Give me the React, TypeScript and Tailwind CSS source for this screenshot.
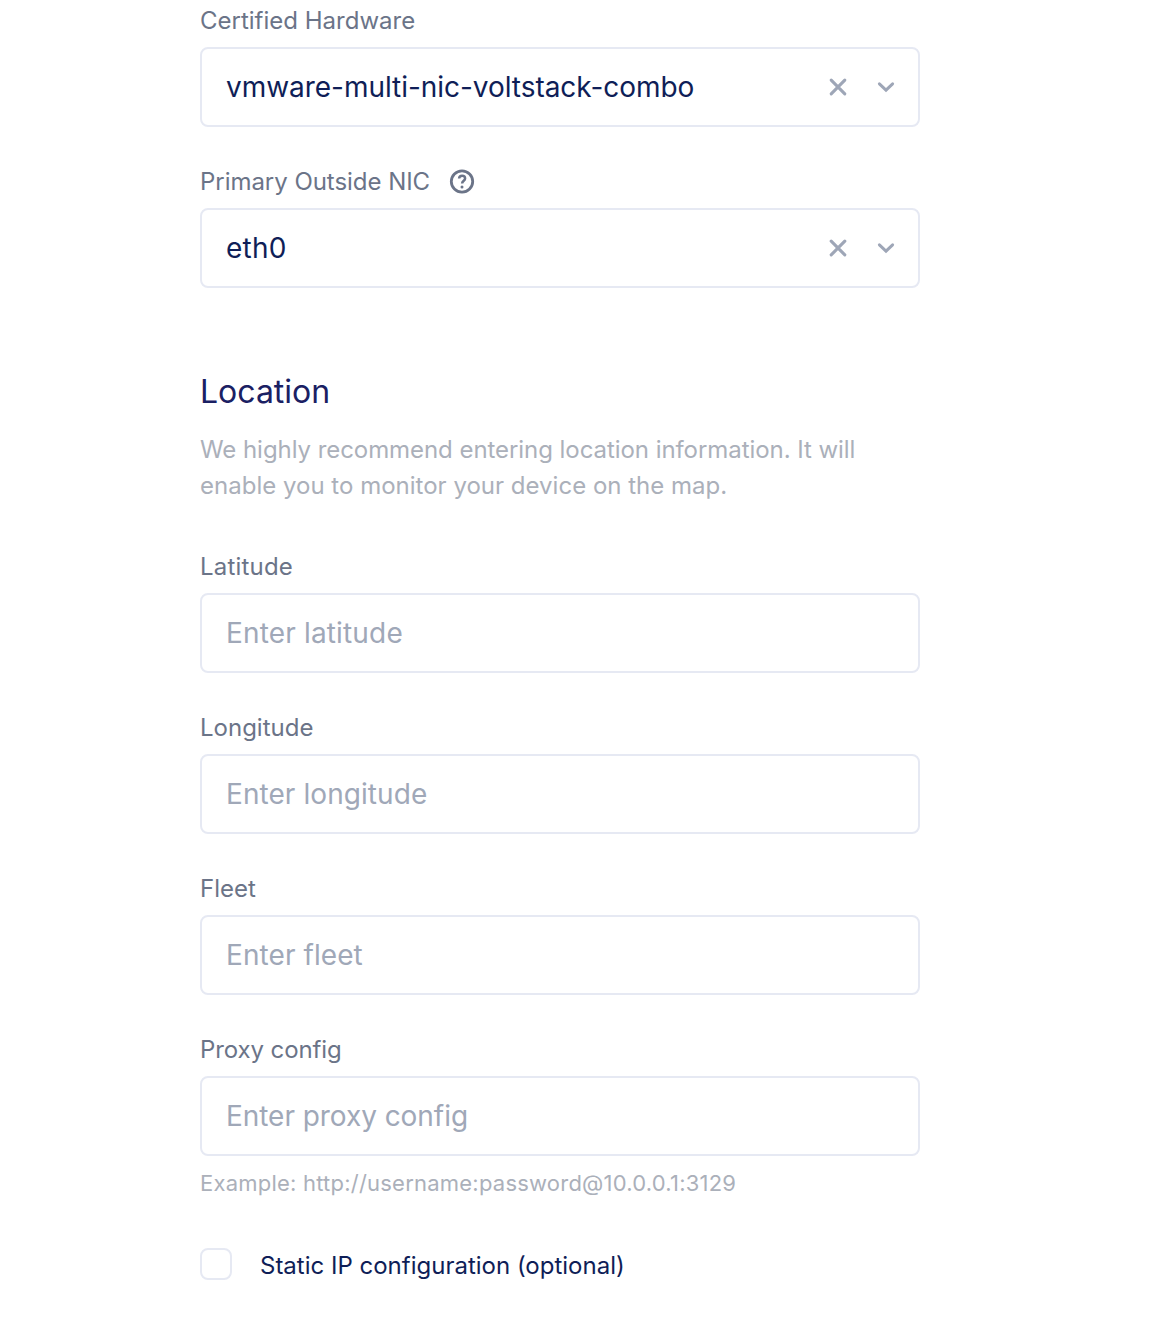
import React from "react";

function Label({ children, tracking = "" }: { children: React.ReactNode; tracking?: string }) {
  return <div className={`flex h-[30px] items-center text-[24px] leading-[30px] text-[#6b7488] ${tracking}`}>{children}</div>;
}

function Select({ value, tracking }: { value: string; tracking: string }) {
  return (
    <div className="mt-[11px] flex h-20 w-[720px] items-center rounded-[8px] border-2 border-[#e6e9f3] bg-white pl-6 pr-[23px]">
      <span className={`flex-1 text-[28px] leading-9 text-[#0f1e57] ${tracking}`}>{value}</span>
      <svg className="mr-[30px] h-[18px] w-[18px]" viewBox="0 0 18 18" fill="none" stroke="#9ea6b7" strokeWidth="3.1" strokeLinecap="round">
        <path d="M2.2 2.2l13.6 13.6M15.8 2.2L2.2 15.8" />
      </svg>
      <svg className="h-[18px] w-[18px]" viewBox="0 0 18 18" fill="none" stroke="#9ea6b7" strokeWidth="3" strokeLinecap="round" strokeLinejoin="miter">
        <path d="M2.4 5.9L9 12.1L15.6 5.9" />
      </svg>
    </div>
  );
}

type FieldProps = { label: string; placeholder: string; labelTracking?: string; tracking?: string };

function Field({ label, placeholder, labelTracking = "", tracking = "" }: FieldProps) {
  return (
    <div>
      <Label tracking={labelTracking}>{label}</Label>
      <input
        placeholder={placeholder}
        className={`mt-[11px] block h-20 w-[720px] rounded-[8px] border-2 border-[#e6e9f3] bg-white px-6 text-[28px] text-[#0f1e57] outline-none placeholder:text-[#a0a8b8] ${tracking}`}
      />
    </div>
  );
}

export default function App() {
  return (
    <main className="h-[1318px] w-full overflow-hidden bg-white pl-[200px] pt-[6px] font-['Inter',sans-serif]">
      <div className="flex flex-col gap-10">
        <div>
          <Label>Certified Hardware</Label>
          <Select value="vmware-multi-nic-voltstack-combo" tracking="tracking-[-0.04px]" />
        </div>
        <div>
          <Label tracking="tracking-[-0.04px]">
            Primary Outside NIC
            <svg className="ml-5 h-6 w-6 overflow-visible" viewBox="0 0 24 24" fill="none" stroke="#6b7488" strokeWidth="2.8">
              <circle cx="12" cy="11.5" r="10.7" />
              <path d="M9.1 8.5c.1-1.8 1.3-2.8 3-2.8 1.8 0 3 1.1 3 2.7 0 2.3-3 2.4-3 5.2" strokeWidth="2.5" />
              <circle cx="12" cy="17.1" r="1.5" fill="#6b7488" stroke="none" />
            </svg>
          </Label>
          <Select value="eth0" tracking="tracking-[0.25px]" />
        </div>
      </div>
      <h2 className="mt-[84px] text-[32px] leading-10 text-[#1a2063]">Location</h2>
      <p className="mt-5 text-[24px] leading-9 text-[#abb0ba]">
        <span className="tracking-[-0.06px]">We highly recommend entering location information. It will</span>
        <br />
        <span className="tracking-[0.01px]">enable you to monitor your device on the map.</span>
      </p>
      <div className="mt-12 flex flex-col gap-10">
        <Field label="Latitude" placeholder="Enter latitude" labelTracking="tracking-[0.2px]" tracking="tracking-[0.16px]" />
        <Field label="Longitude" placeholder="Enter longitude" tracking="tracking-[0.07px]" />
        <Field label="Fleet" placeholder="Enter fleet" tracking="tracking-[0.08px]" />
        <Field label="Proxy config" placeholder="Enter proxy config" labelTracking="tracking-[-0.1px]" tracking="tracking-[-0.05px]" />
      </div>
      <p className="mt-3 text-[22px] leading-[30px] tracking-[0.22px] text-[#abb0ba]">Example: http://username:password@10.0.0.1:3129</p>
      <label className="mt-[50px] flex items-center text-[24px] leading-8 text-[#0f1e57]">
        <input type="checkbox" className="mr-7 h-8 w-8 appearance-none rounded-[8px] border-2 border-[#e6e9f3]" />
        <span className="-mb-1">Static IP configuration (optional)</span>
      </label>
    </main>
  );
}
